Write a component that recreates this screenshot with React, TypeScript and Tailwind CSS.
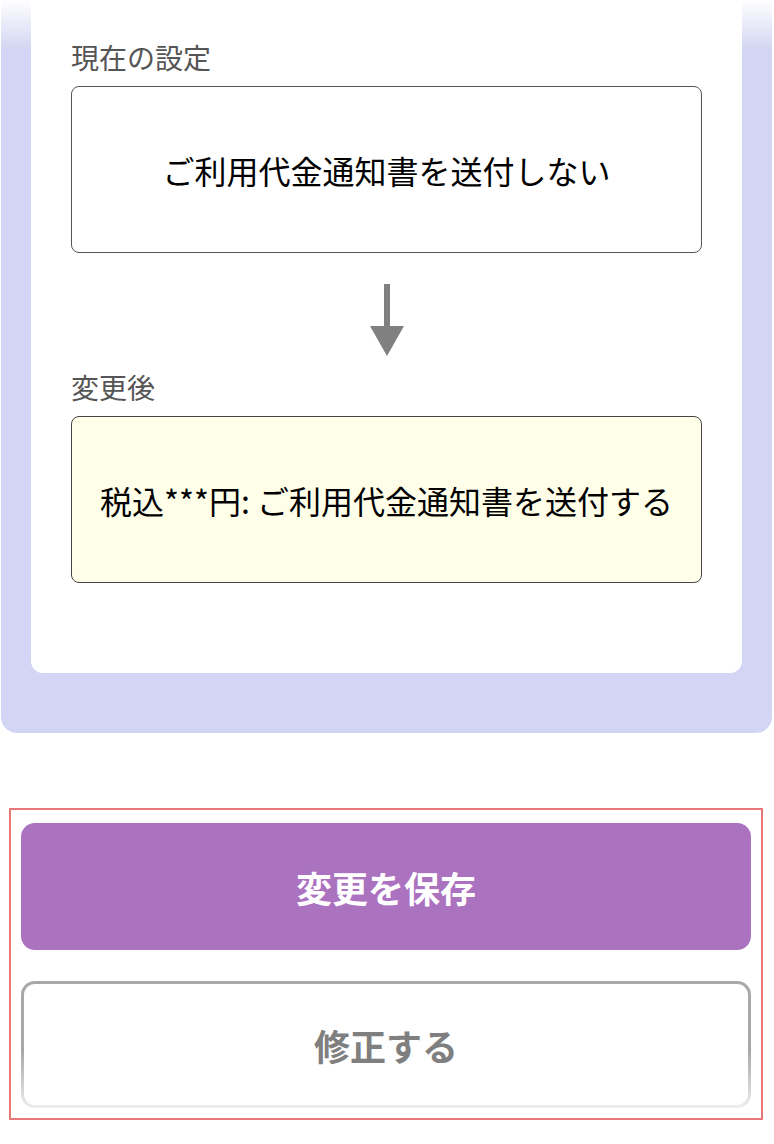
import React from 'react';

const jp = "font-['Noto_Sans_CJK_JP','Noto_Sans',sans-serif]";

const DownArrow = () => (
  <svg width="34" height="72" viewBox="0 0 34 72" className="block">
    <rect x="14" y="0" width="6" height="46" fill="#808080" />
    <polygon points="0,42 34,42 17,72" fill="#808080" />
  </svg>
);

export default function App() {
  return (
    <div className={`w-[774px] min-h-[1144px] bg-white ${jp}`}>
      {/* Settings panel */}
      <div className="ml-[1px] w-[771px] rounded-b-[16px] bg-[linear-gradient(to_bottom,#ffffff,#d2d5f3_50px)] px-[30px] pb-[60px]">
        <div className="rounded-b-[12px] bg-white px-[40px] pt-[38px] pb-[90px]">
          <p className="h-[38px] text-[28px] leading-[38px] text-[#555]">現在の設定</p>
          <div className="mt-[10px] flex h-[167px] items-center justify-center rounded-[8px] border border-[#555] bg-white">
            <span className="text-[32px] text-black">ご利用代金通知書を送付しない</span>
          </div>

          <div className="mt-[31px] flex justify-center">
            <DownArrow />
          </div>

          <p className="mt-[12px] h-[38px] text-[28px] leading-[38px] text-[#555]">変更後</p>
          <div className="mt-[10px] flex h-[167px] items-center justify-center rounded-[8px] border border-[#444] bg-[#fffee8]">
            <span className="text-[32px] text-black">税込***円: ご利用代金通知書を送付する</span>
          </div>
        </div>
      </div>

      {/* Action buttons */}
      <div className="ml-[9px] mt-[75px] w-[754px] border-2 border-[#e87878] px-[10px] pt-[13px] pb-[10px]">
        <button className="flex h-[127px] w-full items-center justify-center rounded-[14px] bg-[#ab72c0] text-[36px] font-bold text-white">
          変更を保存
        </button>
        <div className="mt-[31px] h-[127px] rounded-[14px] bg-[linear-gradient(to_bottom,#a8a8a8_55%,#ededed)] p-[3px]">
          <button className="flex h-full w-full items-center justify-center rounded-[11px] bg-white text-[36px] font-bold text-[#7f7f7f]">
            修正する
          </button>
        </div>
      </div>
    </div>
  );
}
